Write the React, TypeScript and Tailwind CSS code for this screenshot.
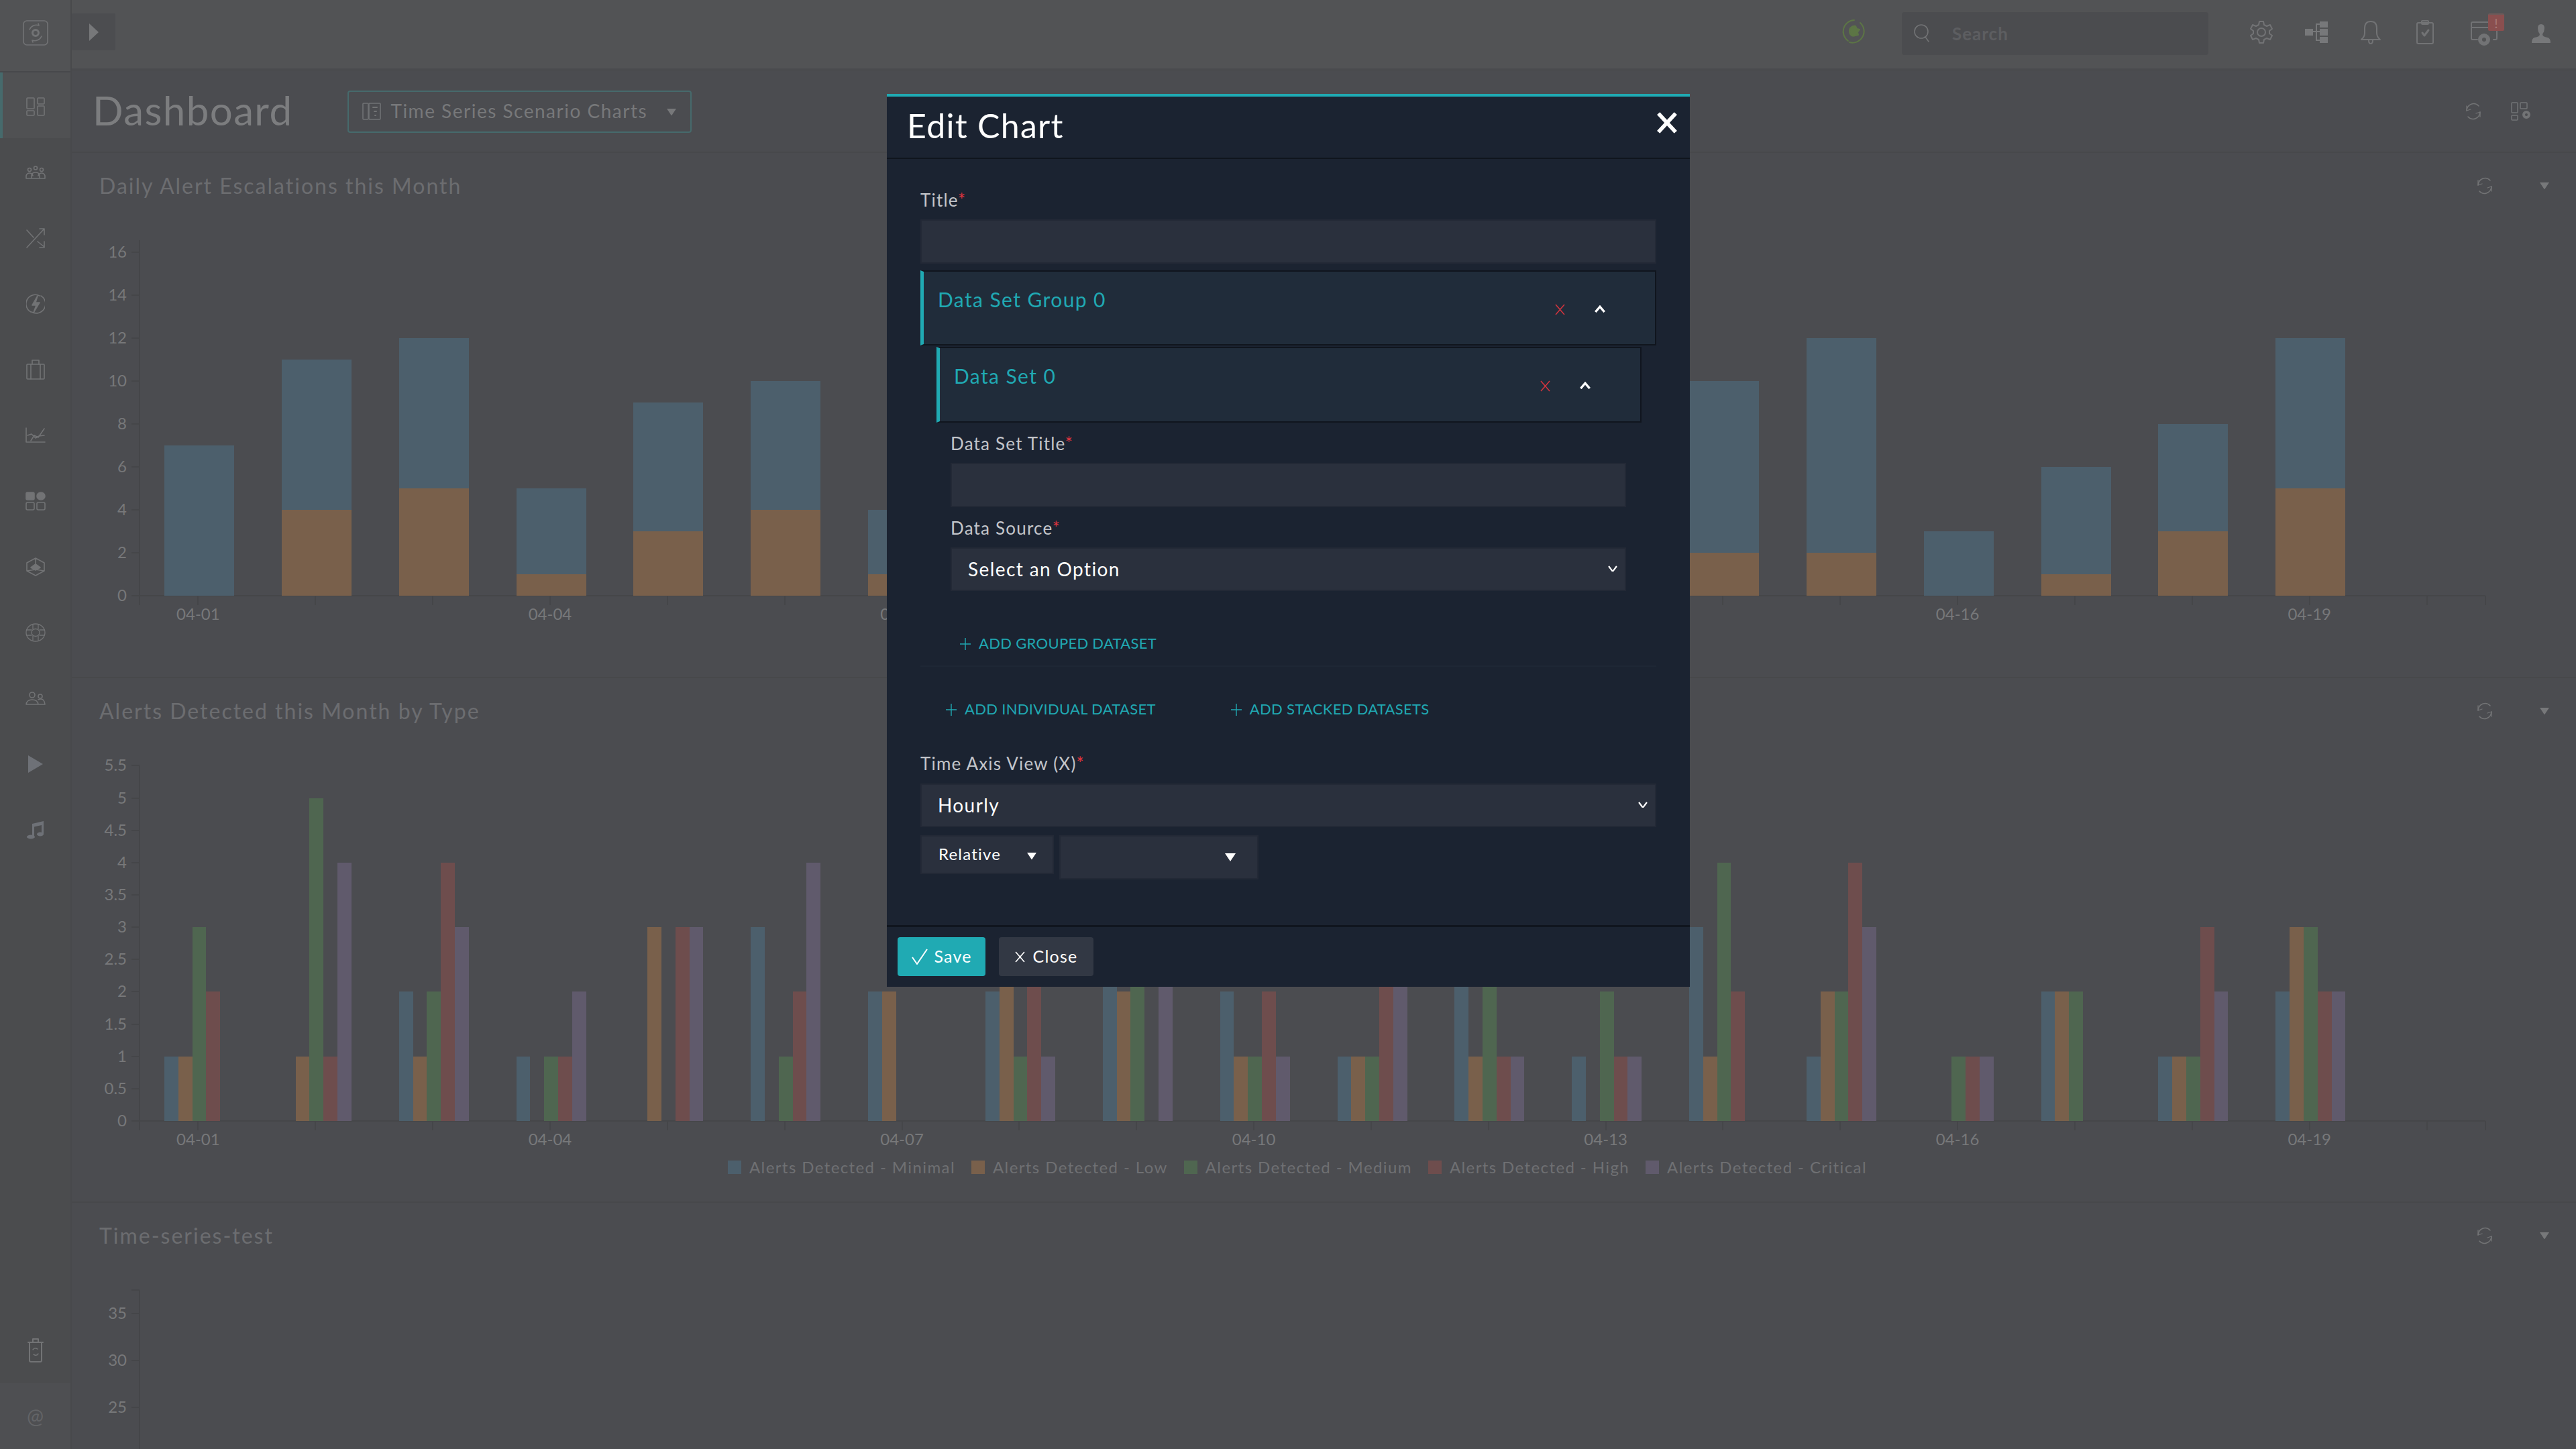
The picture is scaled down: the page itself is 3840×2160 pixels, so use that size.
import type { ReactNode } from "react";

const BLUE = "#4c5f6c";
const ORANGE = "#79604b";
const GREEN = "#4f6650";
const RED = "#6e4d4d";
const PURPLE = "#605a6c";
const SERIES = [BLUE, ORANGE, GREEN, RED, PURPLE];

const STEP = 174.85;
const LEFT = 245;
const AXIS_X = 208;
const AXIS_END = 3705;
const MAIN_X = 107;

const DATES = ["04-01", "04-04", "04-07", "04-10", "04-13", "04-16", "04-19"];

// [total, orange part]
const ESCALATIONS = [
  [7, 0], [11, 4], [12, 5], [5, 1], [9, 3], [10, 4], [4, 1], [6, 2], [8, 2], [9, 3],
  [7, 1], [5, 2], [8, 3], [10, 2], [12, 2], [3, 0], [6, 1], [8, 3], [12, 5],
];

// minimal, low, medium, high, critical
const DETECTED = [
  [1, 1, 3, 2, 0], [0, 1, 5, 1, 4], [2, 1, 2, 4, 3], [1, 0, 1, 1, 2], [0, 3, 0, 3, 3],
  [3, 0, 1, 2, 4], [2, 2, 0, 0, 0], [2, 3, 1, 3, 1], [3, 2, 3, 0, 3], [2, 1, 1, 2, 1],
  [1, 1, 1, 3, 3], [3, 1, 3, 1, 1], [1, 0, 2, 1, 1], [3, 1, 4, 2, 0], [1, 2, 2, 4, 3],
  [0, 0, 1, 1, 1], [2, 2, 2, 0, 0], [1, 1, 1, 3, 2], [2, 3, 3, 2, 2],
];

const LEGEND = [
  ["Minimal", BLUE], ["Low", ORANGE], ["Medium", GREEN], ["High", RED], ["Critical", PURPLE],
];

const AXIS = "#454649";
const LABEL = "#77787a";

function Axes({ top, zero, ticks }: { top: number; zero: number; ticks: { y: number; label: string }[] }) {
  return (
    <g shapeRendering="crispEdges">
      <line x1={AXIS_X - MAIN_X} x2={AXIS_X - MAIN_X} y1={top} y2={zero + 14} stroke={AXIS} strokeWidth={2} />
      <line x1={AXIS_X - MAIN_X} x2={AXIS_END - MAIN_X} y1={zero} y2={zero} stroke={AXIS} strokeWidth={2} />
      {Array.from({ length: 20 }, (_, i) => (
        <line key={i} x1={AXIS_X - MAIN_X + STEP * (i + 0.5)} x2={AXIS_X - MAIN_X + STEP * (i + 0.5)} y1={zero} y2={zero + 14} stroke={AXIS} strokeWidth={2} />
      ))}
      <line x1={AXIS_END - MAIN_X} x2={AXIS_END - MAIN_X} y1={zero} y2={zero + 14} stroke={AXIS} strokeWidth={2} />
      {ticks.map((t) => (
        <g key={t.label}>
          <line x1={196 - MAIN_X} x2={AXIS_X - MAIN_X} y1={t.y} y2={t.y} stroke={AXIS} strokeWidth={2} />
          <text x={189 - MAIN_X} y={t.y + 8} textAnchor="end" fontSize={24} fill={LABEL}>{t.label}</text>
        </g>
      ))}
      {DATES.map((d, i) => (
        <text key={d} x={AXIS_X - MAIN_X + STEP * (i * 3 + 0.5)} y={zero + 36} textAnchor="middle" fontSize={24} fill={LABEL}>{d}</text>
      ))}
    </g>
  );
}

function EscalationChart() {
  const zero = 562;
  const unit = 32;
  const ticks = [0, 2, 4, 6, 8, 10, 12, 14, 16].map((v) => ({ y: zero - v * unit, label: String(v) }));
  return (
    <svg className="block w-[3733px] h-[681px]" viewBox="0 0 3733 681">
      <Axes top={32} zero={zero} ticks={ticks} />
      <g shapeRendering="crispEdges">
        {ESCALATIONS.map(([total, low], i) => (
          <g key={i}>
            <rect x={LEFT - MAIN_X + STEP * i} y={zero - total * unit} width={104} height={(total - low) * unit} fill={BLUE} />
            <rect x={LEFT - MAIN_X + STEP * i} y={zero - low * unit} width={104} height={low * unit} fill={ORANGE} />
          </g>
        ))}
      </g>
    </svg>
  );
}

function DetectedChart() {
  const zero = 562;
  const unit = 96.3;
  const values = [0, 0.5, 1, 1.5, 2, 2.5, 3, 3.5, 4, 4.5, 5, 5.5];
  const ticks = values.map((v) => ({ y: zero - v * unit, label: String(v) }));
  return (
    <svg className="block w-[3733px] h-[611px]" viewBox="0 0 3733 611">
      <Axes top={32} zero={zero} ticks={ticks} />
      <g shapeRendering="crispEdges">
        {DETECTED.map((row, i) =>
          row.map((v, s) => (
            <rect key={s} x={LEFT - MAIN_X + STEP * i + s * 20.8} y={zero - v * unit} width={20.8} height={v * unit} fill={SERIES[s]} />
          )),
        )}
      </g>
    </svg>
  );
}

function TimeSeriesChart() {
  return (
    <svg className="block w-[3733px] h-[269px]" viewBox="0 0 3733 269">
      <g shapeRendering="crispEdges">
        <line x1={AXIS_X - MAIN_X} x2={AXIS_X - MAIN_X} y1={32} y2={269} stroke={AXIS} strokeWidth={2} />
        <line x1={196 - MAIN_X} x2={AXIS_X - MAIN_X} y1={32} y2={32} stroke={AXIS} strokeWidth={2} />
        {[["35", 67], ["30", 137], ["25", 207]].map(([label, y]) => (
          <g key={label}>
            <line x1={196 - MAIN_X} x2={AXIS_X - MAIN_X} y1={y} y2={y} stroke={AXIS} strokeWidth={2} />
            <text x={189 - MAIN_X} y={Number(y) + 8} textAnchor="end" fontSize={24} fill={LABEL}>{label}</text>
          </g>
        ))}
      </g>
    </svg>
  );
}

function Ico({ w, h, children, color = "#727375", sw = 1.6 }: { w: number; h: number; children: ReactNode; color?: string; sw?: number }) {
  return (
    <svg width={w} height={h} viewBox={`0 0 ${w} ${h}`} fill="none" stroke={color} strokeWidth={sw} strokeLinecap="round" strokeLinejoin="round" className="block">
      {children}
    </svg>
  );
}

function Caret({ color = "#77787a", size = 14 }: { color?: string; size?: number }) {
  return (
    <svg width={size} height={size * 0.75} viewBox="0 0 12 9" className="block">
      <path d="M0 0h12L6 9z" fill={color} />
    </svg>
  );
}

function Refresh() {
  return (
    <Ico w={26} h={28}>
      <path d="M21 6A10.5 11 0 0 0 3 13" />
      <path d="M5 22a10.5 11 0 0 0 18-7" />
      <path d="M3 6v7l6-2M23 22v-7l-6 2" strokeWidth={1.3} />
    </Ico>
  );
}

const SIDE_ICONS: ReactNode[] = [
  <Ico w={28} h={28} key="dash">
    <rect x="1" y="1" width="11" height="16" rx="1" /><rect x="17" y="1" width="10" height="9" rx="1" />
    <rect x="1" y="20" width="11" height="7" rx="1" /><rect x="17" y="13" width="10" height="14" rx="1" />
  </Ico>,
  <Ico w={30} h={20} key="team">
    <circle cx="15" cy="3.5" r="2.5" /><circle cx="6" cy="6" r="2.5" /><circle cx="24" cy="6" r="2.5" />
    <path d="M1 19v-4q1-4 5-4t5 4M19 15q1-4 5-4t5 4v4M9 19v-5q1-4 6-4t6 4v5M1 19h28" />
  </Ico>,
  <Ico w={28} h={30} key="shuffle">
    <path d="M1 29 27 1M20 1h7v9M1 3l10 11M17 20l10 8M27 20v9h-7" />
  </Ico>,
  <Ico w={28} h={30} key="bolt">
    <path d="M20 3A13.5 13.5 0 0 0 7 27M8 27A13.5 13.5 0 0 0 22 3" />
    <path d="M17 3 9 17h6l-4 11 9-15h-6z" fill="#727375" />
  </Ico>,
  <Ico w={28} h={30} key="case">
    <rect x="1" y="7" width="26" height="22" rx="1" /><path d="M9 7V1h10v6M7 7v22M21 7v22" />
  </Ico>,
  <Ico w={30} h={24} key="line">
    <path d="M1 1v21h28M8 20l5-8 6 3 9-13M3 12l6-2 6 6 5-3 8-1" />
  </Ico>,
  <Ico w={30} h={28} key="apps">
    <rect x="1" y="1" width="12" height="11" rx="2" fill="#727375" /><ellipse cx="23" cy="6.5" rx="6" ry="5.5" fill="#727375" />
    <rect x="1" y="16" width="12" height="11" rx="2" /><rect x="17" y="16" width="12" height="11" rx="2" />
  </Ico>,
  <Ico w={28} h={28} key="hex">
    <path d="M14 1 27 8v12l-13 7-13-7V8zM14 10v-9M14 18l13 2M14 18 1 20" />
    <path d="m14 10 7 5-7 4-7-4z" fill="#727375" />
  </Ico>,
  <Ico w={30} h={28} key="ring" sw={1.3}>
    <ellipse cx="15" cy="14" rx="14" ry="13" /><ellipse cx="15" cy="14" rx="6" ry="5.5" />
    <path d="M11 2v7M19 2v7M11 19v7M19 19v7M2 10h7M2 18h7M21 10h7M21 18h7" />
  </Ico>,
  <Ico w={30} h={20} key="people">
    <circle cx="10" cy="5" r="4" /><circle cx="22" cy="7" r="3" />
    <path d="M1 19q1-7 9-7t9 7zM19 12q2-1 4-1 5 0 6 8H19" />
  </Ico>,
  <svg width="22" height="26" viewBox="0 0 22 26" className="block" key="play"><path d="M0 0v26l22-13z" fill="#6e7177" /></svg>,
  <svg width="26" height="28" viewBox="0 0 26 28" className="block" key="music">
    <path d="M8 5 25 1v19h-3V7L11 9.5V24H8z" fill="#6e7177" /><ellipse cx="6" cy="24.5" rx="6" ry="3" fill="#6e7177" /><ellipse cx="20" cy="20.5" rx="5" ry="3" fill="#6e7177" />
  </svg>,
];

function Sidebar() {
  return (
    <aside className="w-[107px] shrink-0 flex flex-col bg-[#4b4c4e] border-r-2 border-[#48494c]">
      <div className="h-[108px] flex items-center justify-center pb-[8px] bg-[#525355] border-b-2 border-[#47484b]">
        <Ico w={38} h={38} sw={1.6}>
          <rect x="1" y="1" width="36" height="36" rx="5" />
          <path d="M10 14a11 11 0 0 1 14-6l-1-3M28 24a11 11 0 0 1-14 6l1 3" />
          <circle cx="19" cy="19" r="4.5" strokeWidth={3} />
        </Ico>
      </div>
      {SIDE_ICONS.map((icon, i) => (
        <div key={i} className={i === 0 ? "h-[98px] flex items-center justify-center bg-[#505153] border-l-[4px] border-[#466a6c] pr-[4px] pt-[3px]" : "h-[98px] flex items-center justify-center pt-[3px]"}>
          {icon}
        </div>
      ))}
      <div className="mt-auto h-[98px] flex items-center justify-center">
        <Ico w={24} h={36} sw={2}>
          <path d="M1 6h22M8 6V1h8v5M3 6v27q0 2 2 2h14q2 0 2-2V6" />
          <path d="M8 17q2-3 5-2l2 1M16 23q-2 3-5 2l-2-1" strokeWidth={1.4} />
        </Ico>
      </div>
      <div className="h-[98px] flex items-center justify-center bg-[#4e4f52] pb-[2px] text-[30px] text-[#636467]">@</div>
    </aside>
  );
}

function TopBar() {
  return (
    <header className="h-[106px] shrink-0 bg-[#525355] border-b-4 border-[#4a4b4e] flex">
      <div className="mt-[20px] h-[55px] w-[65px] bg-[#4c4d50] rounded-[2px] flex items-center justify-center">
        <svg width="14" height="26" viewBox="0 0 14 26" className="block"><path d="M0 0v26l14-13z" fill="#77787a" /></svg>
      </div>
      <div className="ml-auto flex items-start">
        <div className="mt-[28px] w-[38px] h-[38px]">
          <Ico w={38} h={38} color="#5c7545" sw={2}>
            <path d="M19 2A17 17 0 0 0 10 33M12 35A17 17 0 0 0 28 6" />
            <path d="M13 14q4-4 8-3l2 4 4 1-3 4 1 4-5 1q-4 2-7-2-2-5 0-9z" fill="#5c7545" />
          </Ico>
        </div>
        <div className="ml-[52px] mt-[18px] w-[457px] h-[64px] bg-[#4b4c4f] rounded-[4px] flex items-center pl-[18px]">
          <Ico w={24} h={28}>
            <ellipse cx="11" cy="11" rx="10" ry="10" /><path d="m17 19 5 7" />
          </Ico>
          <span className="ml-[33px] text-[26px] font-bold tracking-[1px] text-[#5d5e61]">Search</span>
        </div>
        <div className="ml-[62px] mt-[30px] w-[34px] h-[36px]">
          <Ico w={34} h={36} sw={2}>
            <circle cx="17" cy="18" r="6" />
            <path d="M14 2h6l1 5 4 2 5-2 3 6-4 3v4l4 3-3 6-5-2-4 2-1 5h-6l-1-5-4-2-5 2-3-6 4-3v-4l-4-3 3-6 5 2 4-2z" />
          </Ico>
        </div>
        <div className="ml-[48px] mt-[32px] w-[34px] h-[32px]">
          <svg width="34" height="32" viewBox="0 0 34 32" className="block" fill="#77787a">
            <rect x="0" y="11" width="12" height="10" /><rect x="22" y="0" width="12" height="9" /><rect x="22" y="11" width="12" height="10" /><rect x="22" y="23" width="12" height="9" />
            <path d="M12 15h10M17 15V4h5M17 15v13h5" fill="none" stroke="#77787a" strokeWidth="2" />
          </svg>
        </div>
        <div className="ml-[48px] mt-[30px] w-[32px] h-[36px]">
          <Ico w={32} h={36} sw={2}>
            <path d="M2 29q5-4 5-10V12Q7 2 16 2t9 10v7q0 6 5 10zM13 30q0 5 3 5t3-5" />
          </Ico>
        </div>
        <div className="ml-[52px] mt-[30px] w-[26px] h-[36px]">
          <Ico w={26} h={36} sw={2}>
            <rect x="1" y="4" width="24" height="31" rx="2" /><rect x="8" y="1" width="10" height="5" rx="1" />
            <path d="m9 19 3 4 6-8" strokeWidth={3} />
          </Ico>
        </div>
        <div className="relative ml-[55px] mt-[32px] w-[42px] h-[38px]">
          <Ico w={42} h={38} sw={2}>
            <path d="M10 27H3q-2 0-2-2V3q0-2 2-2h34q2 0 2 2v22q0 2-2 2h-3M1 9h38" />
            <circle cx="20" cy="27" r="6" strokeWidth={6} />
          </Ico>
          <div className="absolute left-[26px] top-[-12px] w-[24px] h-[26px] bg-[#8a4f4f] border-t-2 border-[#6d5a5a] rounded-[2px] flex items-center justify-center text-[20px] leading-none text-[#a67a7a]">!</div>
        </div>
        <div className="ml-[49px] mr-[38px] mt-[36px] w-[28px] h-[28px]">
          <svg width="28" height="28" viewBox="0 0 28 28" className="block">
            <path d="M14 0q5 0 5 6 0 5-3 9 0 4 8 5 4 1 4 8H0q0-7 4-8 8-1 8-5-3-4-3-9 0-6 5-6z" fill="#77787a" />
          </svg>
        </div>
      </div>
    </header>
  );
}

function SectionTitle({ title }: { title: string }) {
  return (
    <div className="h-[98px] flex items-center pl-[41px]">
      <h2 className="text-[32px] tracking-[2px] text-[#6c6d70]">{title}</h2>
      <div className="ml-auto mr-[69px]"><Refresh /></div>
      <div className="mr-[40px]"><Caret /></div>
    </div>
  );
}

function Required({ children }: { children: ReactNode }) {
  return (
    <label className="block h-[30px] leading-[30px] text-[26px] tracking-[1.2px] text-[#c3c5ca]">
      {children}
      <span className="text-[#e0343e]">*</span>
    </label>
  );
}

function Field() {
  return <input className="block w-full h-[66px] bg-[#2a303d] border-2 border-[#232936] outline-none" />;
}

function Chevron({ up = false, color = "#ffffff", w = 16, sw = 2 }: { up?: boolean; color?: string; w?: number; sw?: number }) {
  return (
    <svg width={w} height={w * 0.62} viewBox="0 0 16 10" fill="none" className="block">
      <path d={up ? "M2 9l6-7 6 7" : "M2 1l6 8 6-8"} stroke={color} strokeWidth={sw} />
    </svg>
  );
}

function Cross({ size = 15, color = "#d0343e", sw = 1.6 }: { size?: number; color?: string; sw?: number }) {
  return (
    <svg width={size} height={size + 2} viewBox="0 0 15 17" fill="none" className="block">
      <path d="M1 1l13 15M14 1 1 16" stroke={color} strokeWidth={sw} />
    </svg>
  );
}

function Selectish({ label }: { label: string }) {
  return (
    <div className="h-[65px] bg-[#2a303d] border-2 border-[#232936] flex items-center pl-[24px] pr-[10px] pb-[2px] text-[28px] tracking-[1.4px] text-white">
      <span>{label}</span>
      <div className="ml-auto"><Chevron sw={2.2} /></div>
    </div>
  );
}

function Accordion({ title, className }: { title: string; className: string }) {
  return (
    <div className={`flex bg-[#202c3a] border-2 border-l-[5px] border-[#10151e] border-l-[#20aab3] ${className}`}>
      <div className="pl-[21px] pt-[23px] text-[30px] leading-[36px] tracking-[1.4px] text-[#20a9b3]">{title}</div>
      <div className="ml-auto flex items-start pt-[48px] pr-[73px]">
        <Cross />
        <div className="ml-[43px] mt-[2px]"><Chevron up sw={3} w={18} /></div>
      </div>
    </div>
  );
}

function AddLink({ label, className = "" }: { label: string; className?: string }) {
  return (
    <span className={`inline-flex items-center h-[30px] text-[22px] tracking-[0.3px] text-[#20a9b3] ${className}`}>
      <svg width="16" height="20" viewBox="0 0 16 20" fill="none" className="block mr-[12px] mt-[4px]">
        <path d="M8 1v18M0 10h16" stroke="#20a9b3" strokeWidth="1.4" />
      </svg>
      {label}
    </span>
  );
}

function Modal() {
  return (
    <div className="absolute left-[1322px] top-[140px] w-[1197px] h-[1331px] bg-[#1b2331] border-t-4 border-[#20aab3] flex flex-col text-white">
      <div className="h-[93px] shrink-0 border-b-2 border-[#10151e] flex items-center pl-[30px] pr-[18px]">
        <h1 className="mb-[4px] text-[50px] tracking-[1.3px] font-normal">Edit Chart</h1>
        <svg width="32" height="32" viewBox="0 0 30 30" className="ml-auto mb-[14px] block" fill="none">
          <path d="M3 2l24 26M27 2 3 28" stroke="#fff" strokeWidth="5.5" />
        </svg>
      </div>
      <div className="flex-1 px-[50px] pt-[46px]">
        <Required>Title</Required>
        <div className="mt-[14px]"><Field /></div>
        <Accordion title="Data Set Group 0" className="mt-[10px] h-[112px]" />
        <Accordion title="Data Set 0" className="mt-[2px] ml-[24px] mr-[22px] h-[113px]" />
        <div className="mx-[45px] pt-[16px]">
          <Required>Data Set Title</Required>
          <div className="mt-[14px]"><Field /></div>
          <div className="mt-[16px]"><Required>Data Source</Required></div>
          <div className="mt-[14px]"><Selectish label="Select an Option" /></div>
          <div className="mt-[62px] pl-[14px]"><AddLink label="ADD GROUPED DATASET" /></div>
        </div>
        <div className="mt-[16px] h-[2px] bg-[#1e2735]" />
        <div className="mt-[47px] flex pl-[38px]">
          <AddLink label="ADD INDIVIDUAL DATASET" />
          <AddLink label="ADD STACKED DATASETS" className="ml-[112px]" />
        </div>
        <div className="mt-[52px]"><Required>Time Axis View (X)</Required></div>
        <div className="mt-[15px]"><Selectish label="Hourly" /></div>
        <div className="mt-[12px] flex items-start">
          <div className="w-[199px] h-[58px] bg-[#2a303d] border-2 border-[#232936] flex items-center pl-[25px] pr-[24px] pb-[3px] text-[24px] tracking-[1.2px]">
            Relative
            <div className="ml-auto mt-[8px]"><Caret color="#fff" size={14} /></div>
          </div>
          <div className="ml-[8px] w-[297px] h-[66px] bg-[#2a303d] border-2 border-[#232936] flex items-center justify-end pr-[32px]">
            <Caret color="#fff" size={16} />
          </div>
        </div>
      </div>
      <div className="h-[92px] shrink-0 border-t-[3px] border-[#10151e] pt-[15px] pl-[16px] flex items-start gap-[20px] text-[25px] tracking-[1.2px]">
        <button className="w-[131px] h-[58px] rounded-[4px] bg-[#20aab3] flex items-center justify-center gap-[8px] text-white">
          <svg width="26" height="24" viewBox="0 0 26 24" fill="none" className="block"><path d="M2 13l7 10L24 1" stroke="#fff" strokeWidth="2" /></svg>
          Save
        </button>
        <button className="w-[141px] h-[58px] rounded-[4px] bg-[#323844] flex items-center justify-center gap-[12px] text-white">
          <Cross color="#fff" sw={1.6} />
          Close
        </button>
      </div>
    </div>
  );
}

export default function App() {
  return (
    <div className="relative flex h-screen w-screen overflow-hidden bg-[#4b4c50] font-['Lato',sans-serif]">
      <Sidebar />
      <div className="flex-1 min-w-0 flex flex-col">
        <TopBar />
        <div className="h-[122px] shrink-0 border-b-2 border-[#47484b] flex items-center pl-[31px]">
          <h1 className="mb-[4px] text-[60px] font-normal tracking-[1.4px] leading-none text-[#7c7d7f]">Dashboard</h1>
          <div className="ml-[82px] w-[513px] h-[63px] rounded-[4px] border-2 border-[#466a6c] flex items-center pl-[20px] pr-[21px] text-[28px] tracking-[1.5px] text-[#77787a]">
            <Ico w={28} h={26} sw={1.5}>
              <rect x="1" y="1" width="8" height="24" rx="1" /><rect x="10" y="1" width="17" height="24" rx="1" />
              <path d="M16 7h6M18 13h3M19 19h1" strokeWidth={2} />
            </Ico>
            <span className="ml-[14px] mb-[3px]">Time Series Scenario Charts</span>
            <div className="ml-auto mt-[2px]"><Caret size={14} /></div>
          </div>
          <div className="ml-auto mr-[43px]"><Refresh /></div>
          <div className="mr-[65px]">
            <Ico w={32} h={28} sw={1.5}>
              <rect x="1" y="1" width="9" height="15" rx="1" /><rect x="14" y="1" width="10" height="9" rx="1" /><rect x="1" y="20" width="9" height="7" rx="1" />
              <circle cx="23" cy="19" r="4" strokeWidth={4} />
            </Ico>
          </div>
        </div>
        <section className="h-[783px] shrink-0 border-b-2 border-[#47484b]">
          <SectionTitle title="Daily Alert Escalations this Month" />
          <EscalationChart />
        </section>
        <section className="h-[782px] shrink-0 border-b-2 border-[#47484b]">
          <SectionTitle title="Alerts Detected this Month by Type" />
          <DetectedChart />
          <div className="h-[40px] flex items-center pl-[978px] text-[24px] tracking-[1.4px] text-[#6f7073]">
            {LEGEND.map(([name, color]) => (
              <div key={name} className="flex items-center mr-[24px]">
                <span className="w-[20px] h-[20px] mr-[12px]" style={{ backgroundColor: color }} />
                Alerts Detected - {name}
              </div>
            ))}
          </div>
        </section>
        <section className="flex-1 min-h-0">
          <SectionTitle title="Time-series-test" />
          <TimeSeriesChart />
        </section>
      </div>
      <Modal />
    </div>
  );
}
